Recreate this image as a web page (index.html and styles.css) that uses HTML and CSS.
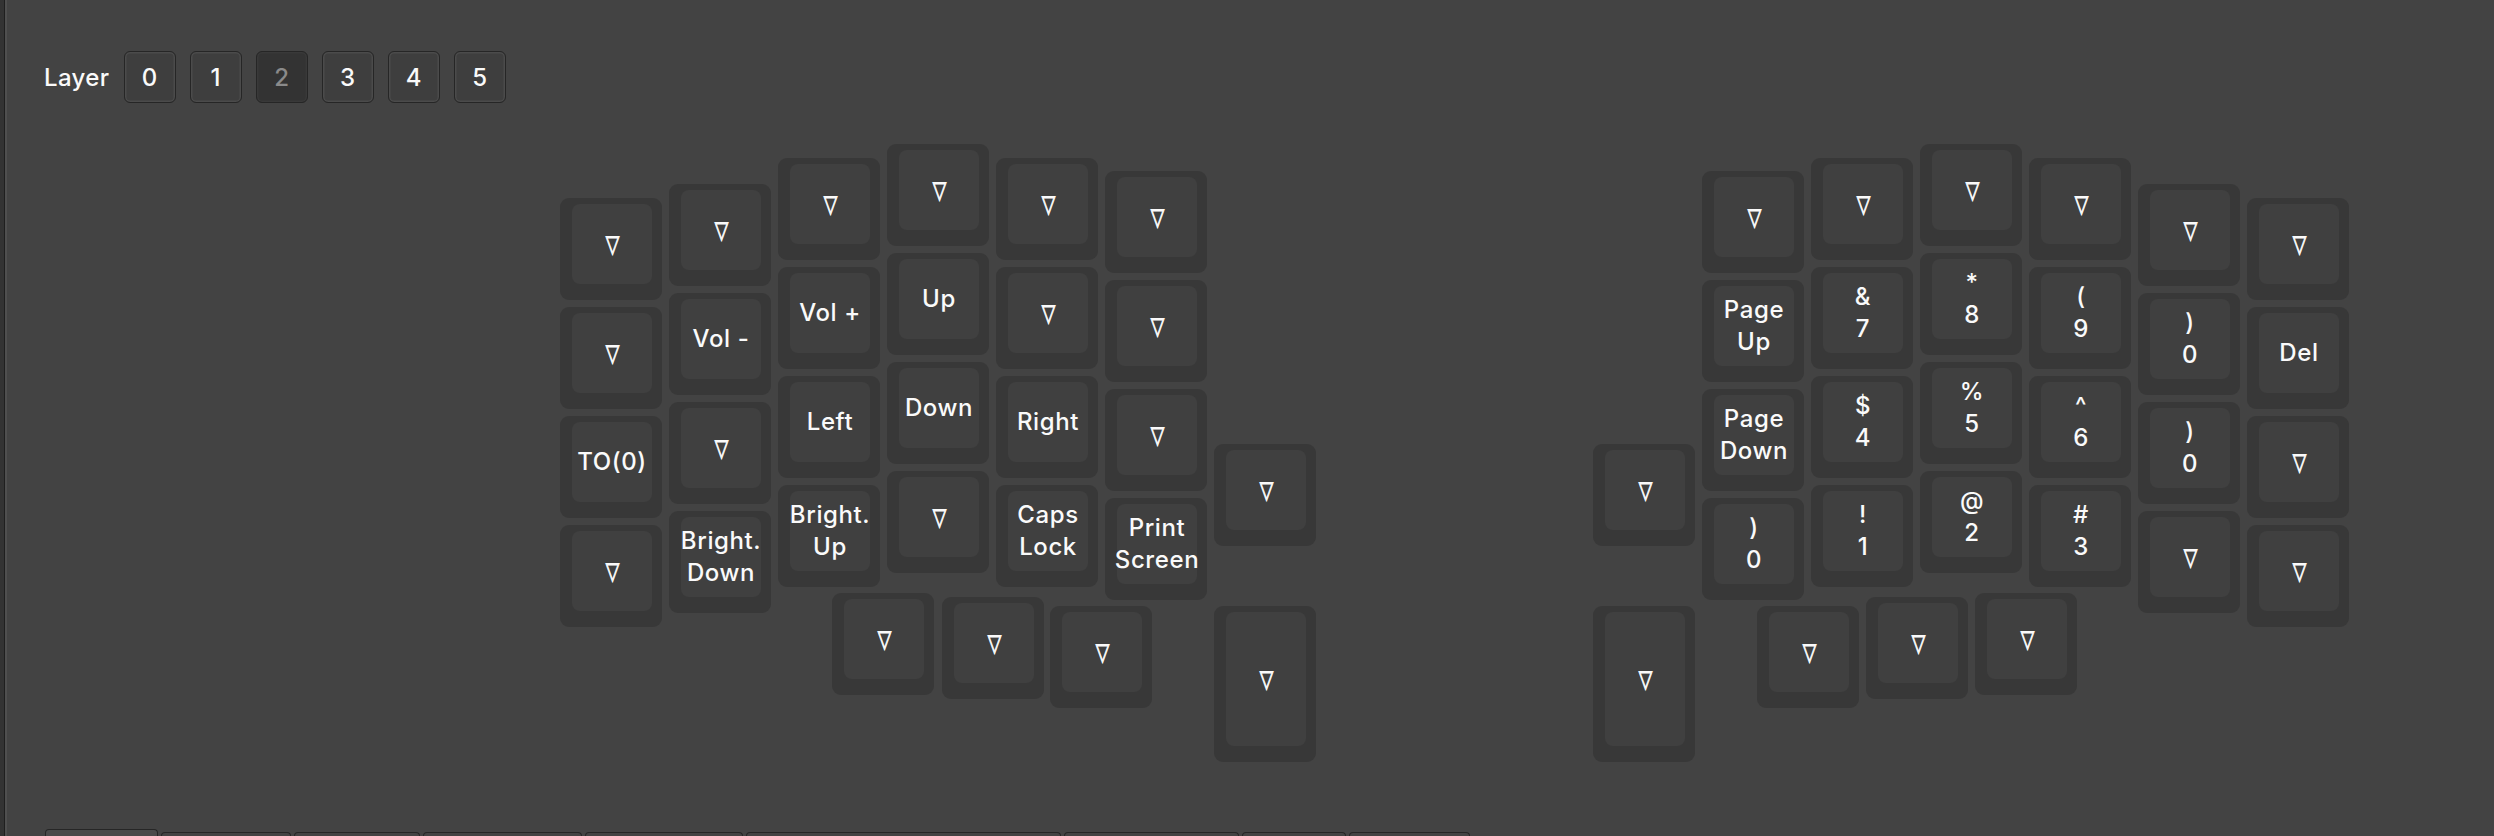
FILE: index.html
```html
<!DOCTYPE html>
<html>
<head>
<meta charset="utf-8">
<link rel="stylesheet" href="styles.css">
</head>
<body>
<div class="app">
  <div class="layerbar">
    <span class="layer-label">Layer</span>
    <div class="layer-btn">0</div>
    <div class="layer-btn">1</div>
    <div class="layer-btn active">2</div>
    <div class="layer-btn">3</div>
    <div class="layer-btn">4</div>
    <div class="layer-btn">5</div>
  </div>
  <div class="keyboard">
    <!-- left half -->
    <div class="key" style="left:0px;top:54px"><div class="cap"><span class="tri">▽</span></div></div>
    <div class="key" style="left:0px;top:163px"><div class="cap"><span class="tri">▽</span></div></div>
    <div class="key" style="left:0px;top:272px"><div class="cap">TO(0)</div></div>
    <div class="key" style="left:0px;top:381px"><div class="cap"><span class="tri">▽</span></div></div>

    <div class="key" style="left:109px;top:40px"><div class="cap"><span class="tri">▽</span></div></div>
    <div class="key" style="left:109px;top:149px"><div class="cap">Vol -</div></div>
    <div class="key" style="left:109px;top:258px"><div class="cap"><span class="tri">▽</span></div></div>
    <div class="key" style="left:109px;top:367px"><div class="cap"><span>Bright.<br>Down</span></div></div>

    <div class="key" style="left:218px;top:14px"><div class="cap"><span class="tri">▽</span></div></div>
    <div class="key" style="left:218px;top:123px"><div class="cap">Vol +</div></div>
    <div class="key" style="left:218px;top:232px"><div class="cap">Left</div></div>
    <div class="key" style="left:218px;top:341px"><div class="cap"><span>Bright.<br>Up</span></div></div>

    <div class="key" style="left:327px;top:0px"><div class="cap"><span class="tri">▽</span></div></div>
    <div class="key" style="left:327px;top:109px"><div class="cap">Up</div></div>
    <div class="key" style="left:327px;top:218px"><div class="cap">Down</div></div>
    <div class="key" style="left:327px;top:327px"><div class="cap"><span class="tri">▽</span></div></div>

    <div class="key" style="left:436px;top:14px"><div class="cap"><span class="tri">▽</span></div></div>
    <div class="key" style="left:436px;top:123px"><div class="cap"><span class="tri">▽</span></div></div>
    <div class="key" style="left:436px;top:232px"><div class="cap">Right</div></div>
    <div class="key" style="left:436px;top:341px"><div class="cap"><span>Caps<br>Lock</span></div></div>

    <div class="key" style="left:545px;top:27px"><div class="cap"><span class="tri">▽</span></div></div>
    <div class="key" style="left:545px;top:136px"><div class="cap"><span class="tri">▽</span></div></div>
    <div class="key" style="left:545px;top:245px"><div class="cap"><span class="tri">▽</span></div></div>
    <div class="key" style="left:545px;top:354px"><div class="cap"><span>Print<br>Screen</span></div></div>

    <div class="key" style="left:654px;top:300px"><div class="cap"><span class="tri">▽</span></div></div>
    <div class="key tall" style="left:654px;top:462px"><div class="cap"><span class="tri">▽</span></div></div>

    <div class="key" style="left:272px;top:449px"><div class="cap"><span class="tri">▽</span></div></div>
    <div class="key" style="left:382px;top:453px"><div class="cap"><span class="tri">▽</span></div></div>
    <div class="key" style="left:490px;top:462px"><div class="cap"><span class="tri">▽</span></div></div>

    <!-- right half -->
    <div class="key" style="left:1033px;top:300px"><div class="cap"><span class="tri">▽</span></div></div>
    <div class="key tall" style="left:1033px;top:462px"><div class="cap"><span class="tri">▽</span></div></div>

    <div class="key" style="left:1142px;top:27px"><div class="cap"><span class="tri">▽</span></div></div>
    <div class="key" style="left:1142px;top:136px"><div class="cap"><span>Page<br>Up</span></div></div>
    <div class="key" style="left:1142px;top:245px"><div class="cap"><span>Page<br>Down</span></div></div>
    <div class="key" style="left:1142px;top:354px"><div class="cap"><span>)<br>0</span></div></div>

    <div class="key" style="left:1251px;top:14px"><div class="cap"><span class="tri">▽</span></div></div>
    <div class="key" style="left:1251px;top:123px"><div class="cap"><span>&amp;<br>7</span></div></div>
    <div class="key" style="left:1251px;top:232px"><div class="cap"><span>$<br>4</span></div></div>
    <div class="key" style="left:1251px;top:341px"><div class="cap"><span>!<br>1</span></div></div>

    <div class="key" style="left:1360px;top:0px"><div class="cap"><span class="tri">▽</span></div></div>
    <div class="key" style="left:1360px;top:109px"><div class="cap"><span>*<br>8</span></div></div>
    <div class="key" style="left:1360px;top:218px"><div class="cap"><span>%<br>5</span></div></div>
    <div class="key" style="left:1360px;top:327px"><div class="cap"><span>@<br>2</span></div></div>

    <div class="key" style="left:1469px;top:14px"><div class="cap"><span class="tri">▽</span></div></div>
    <div class="key" style="left:1469px;top:123px"><div class="cap"><span>(<br>9</span></div></div>
    <div class="key" style="left:1469px;top:232px"><div class="cap"><span>^<br>6</span></div></div>
    <div class="key" style="left:1469px;top:341px"><div class="cap"><span>#<br>3</span></div></div>

    <div class="key" style="left:1578px;top:40px"><div class="cap"><span class="tri">▽</span></div></div>
    <div class="key" style="left:1578px;top:149px"><div class="cap"><span>)<br>0</span></div></div>
    <div class="key" style="left:1578px;top:258px"><div class="cap"><span>)<br>0</span></div></div>
    <div class="key" style="left:1578px;top:367px"><div class="cap"><span class="tri">▽</span></div></div>

    <div class="key" style="left:1687px;top:54px"><div class="cap"><span class="tri">▽</span></div></div>
    <div class="key" style="left:1687px;top:163px"><div class="cap">Del</div></div>
    <div class="key" style="left:1687px;top:272px"><div class="cap"><span class="tri">▽</span></div></div>
    <div class="key" style="left:1687px;top:381px"><div class="cap"><span class="tri">▽</span></div></div>

    <div class="key" style="left:1197px;top:462px"><div class="cap"><span class="tri">▽</span></div></div>
    <div class="key" style="left:1306px;top:453px"><div class="cap"><span class="tri">▽</span></div></div>
    <div class="key" style="left:1415px;top:449px"><div class="cap"><span class="tri">▽</span></div></div>
  </div>
  <div class="tabs">
    <div class="tab sel t1"></div>
    <div class="tab t2"></div>
    <div class="tab t3"></div>
    <div class="tab t4"></div>
    <div class="tab t5"></div>
    <div class="tab t6"></div>
    <div class="tab t7"></div>
    <div class="tab t8"></div>
    <div class="tab t9"></div>
  </div>
</div>
</body>
</html>
```

FILE: styles.css
```css
* { box-sizing: border-box; }
html, body { margin: 0; padding: 0; }
body {
  width: 2494px;
  height: 836px;
  overflow: hidden;
  background: #434343;
  font-family: Inter, "Noto Sans", sans-serif;
  color: #fafafa;
}
.app {
  height: 836px;
  display: flex;
  flex-direction: column;
  box-shadow: inset 4px 0 #333333, inset 5px 0 #1f1f1f, inset 7px 0 #4f4f4f;
}
.layerbar {
  display: flex;
  align-items: center;
  gap: 14px;
  padding: 51px 0 0 44px;
}
.layer-label {
  font-size: 24px;
  font-weight: 500;
  letter-spacing: 0.4px;
  min-width: 65px;
}
.layer-btn {
  width: 52px;
  height: 52px;
  border: 1.5px solid #262626;
  border-radius: 6px;
  background: #3e3e3e;
  box-shadow: inset 0 0 0 1.5px #4b4b4b;
  display: flex;
  align-items: center;
  justify-content: center;
  font-size: 24px;
  font-weight: 500;
  color: #fafafa;
}
.layer-btn.active {
  background: #333333;
  box-shadow: inset 0 0 0 1.5px #393939;
  color: #8a8a8a;
}
.keyboard {
  position: relative;
  margin: 41px 0 0 560px;
  width: 1790px;
  height: 620px;
}
.key {
  position: absolute;
  width: 102px;
  height: 102px;
  background: #383838;
  border-radius: 9px;
  padding: 6px 10px 16px 12px;
}
.key.tall { height: 156px; }
.cap {
  height: 100%;
  background: #404040;
  border-radius: 8px;
  display: flex;
  align-items: center;
  justify-content: center;
  text-align: center;
  font-size: 24px;
  font-weight: 500;
  letter-spacing: 0.6px;
  line-height: 32px;
  white-space: nowrap;
}
.tri {
  font-family: "DejaVu Sans", sans-serif;
  font-size: 22px;
  font-weight: bold;
  letter-spacing: 0;
  display: inline-block;
  -webkit-text-stroke: 0.9px #fafafa;
  transform: scale(0.8, 1.1);
}
.tabs {
  margin-top: auto;
  display: flex;
  align-items: flex-end;
  gap: 3px;
  padding-left: 45px;
  height: 7px;
}
.tab {
  height: 4px;
  border-top: 1.5px solid #262626;
  border-left: 1px solid #262626;
  border-right: 1px solid #262626;
  border-radius: 4px 4px 0 0;
  background: #434343;
}
.tab.sel { height: 7px; background: #4a4a4a; }
.t1 { width: 113px; }
.t2 { width: 130px; }
.t3 { width: 126px; }
.t4 { width: 159px; }
.t5 { width: 158px; }
.t6 { width: 315px; }
.t7 { width: 175px; }
.t8 { width: 104px; }
.t9 { width: 121px; }
```
